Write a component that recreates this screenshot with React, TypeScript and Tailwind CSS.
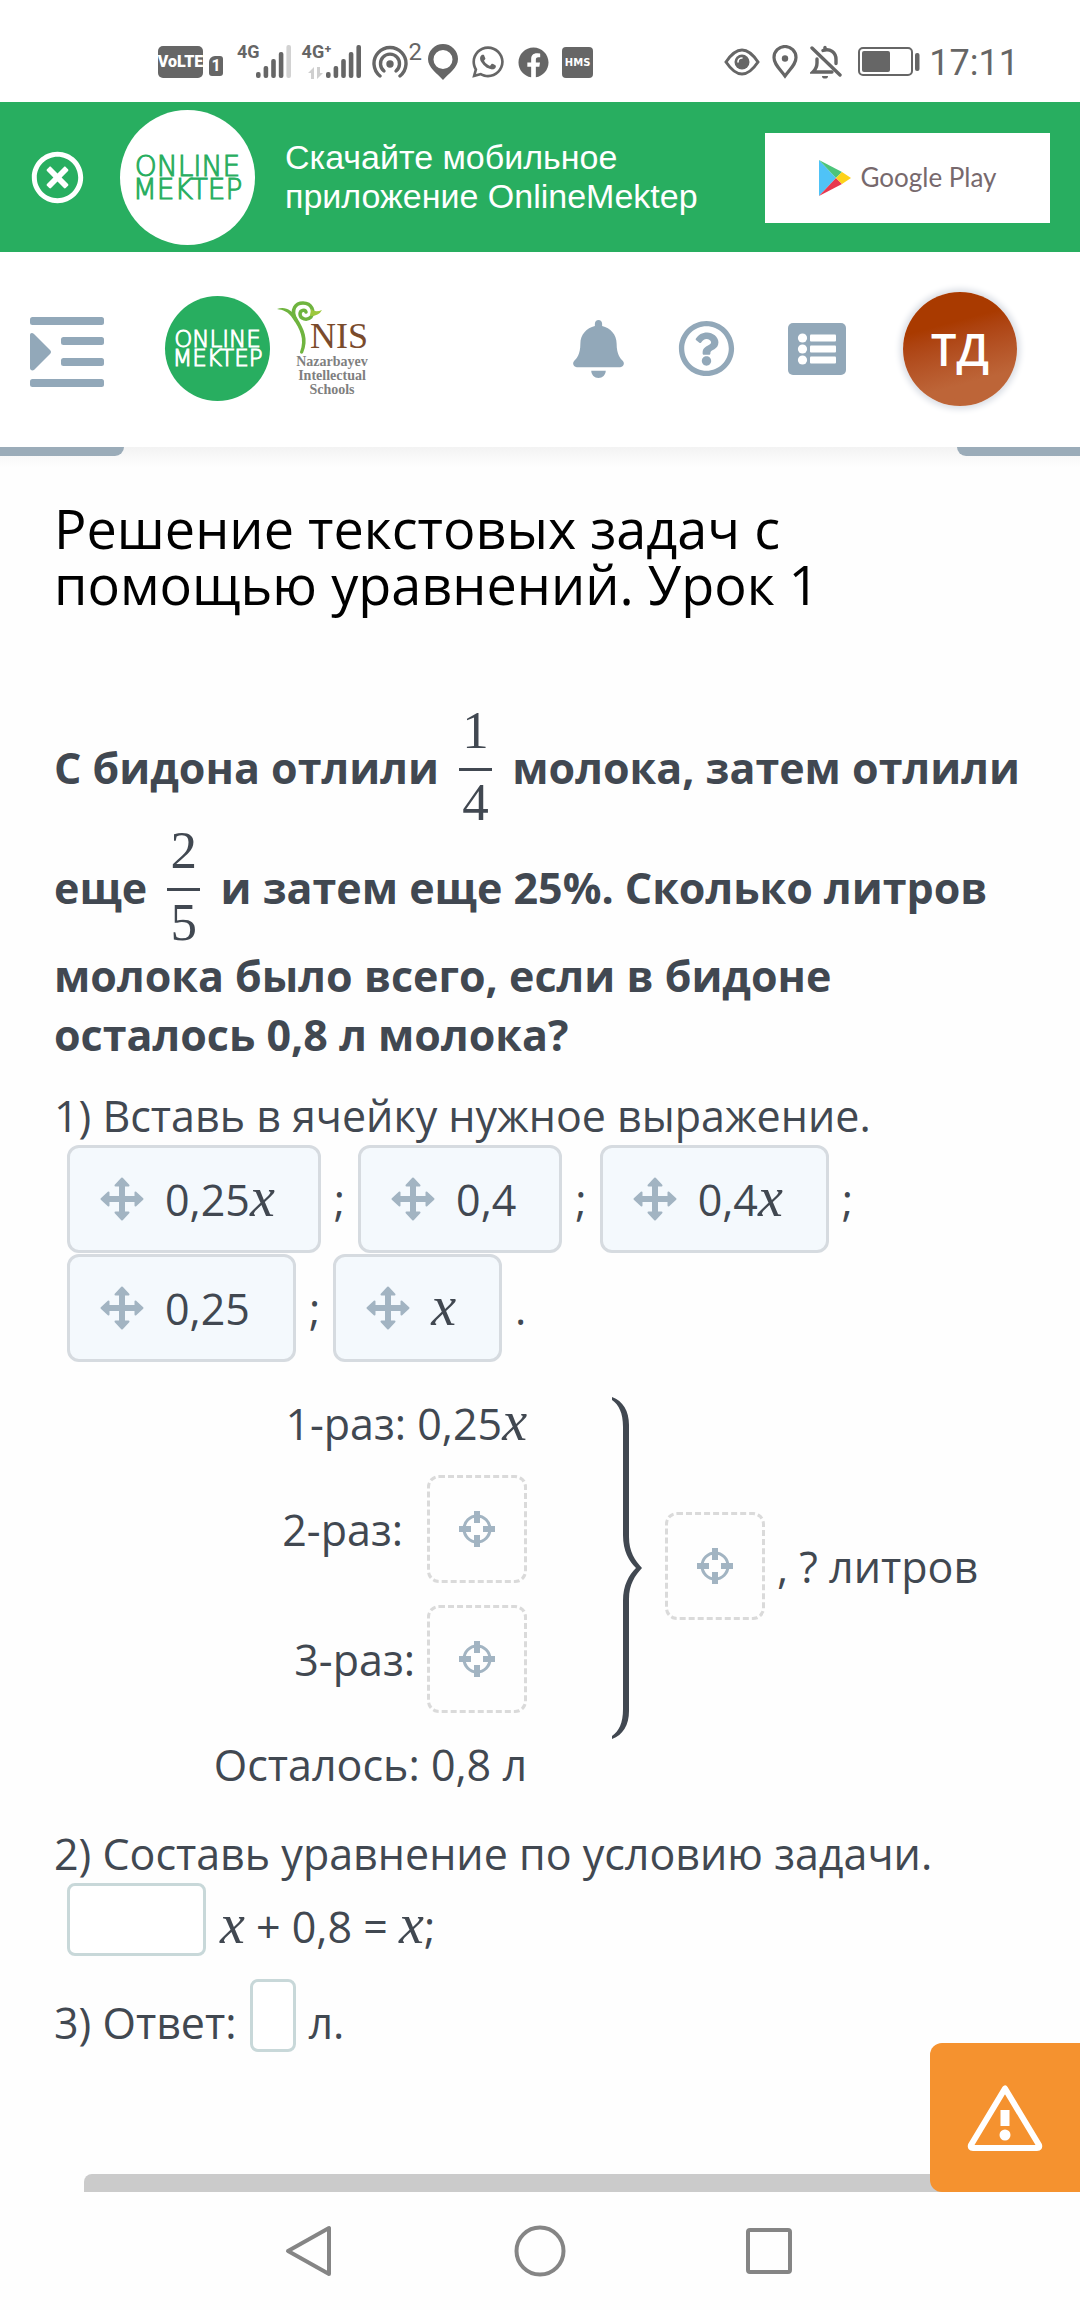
import type { ReactNode } from "react";
import { FaBell, FaFacebook, FaRegQuestionCircle, FaRegTimesCircle, FaWhatsapp } from "react-icons/fa";

function SignalBars({ weak = false }: { weak?: boolean }) {
  const heights = [6, 12, 19, 26, 33];
  return (
    <svg viewBox="0 0 36 34" className="h-[34px] w-9" fill="#666">
      {heights.map((h, i) => (
        <rect key={h} x={i * 7.6} y={34 - h} width="4.6" height={h} rx="2" fill={weak && i === 4 ? "#d2d2d2" : "#666"} />
      ))}
    </svg>
  );
}

function StatusBar() {
  return (
    <div className="flex h-[102px] items-start justify-between bg-white pt-[44px] pr-[61px] pl-[158px] font-['Roboto',sans-serif] text-[#666]">
      <div className="flex items-start">
        <span className="mt-[2px] flex h-8 w-[45px] items-center justify-center rounded-[5px] bg-[#666] text-[16px] font-black text-white">
          VoLTE
        </span>
        <span className="mt-3 ml-[6px] flex h-5 w-[14px] items-center justify-center rounded-[3px] rounded-tl-md bg-[#666] text-[16px] font-bold text-white">
          1
        </span>
        <span className="ml-[14px] text-[18px] leading-4 font-bold">4G</span>
        <span className="-ml-1">
          <SignalBars weak />
        </span>
        <span className="relative ml-[10px] w-6 text-[18px] leading-4 font-bold whitespace-nowrap">
          4G⁺
          <svg viewBox="0 0 16 12" className="absolute top-[23px] left-[6px] h-3 w-4" fill="#cfcfcf">
            <path d="M6 0v12H3V6H0zM9 0v12l6-6h-3V0z" />
          </svg>
        </span>
        <SignalBars />
        <svg viewBox="0 0 36 34" className="mt-px ml-[10px] h-[34px] w-9" fill="none" stroke="#666" strokeWidth="3.4" strokeLinecap="round">
          <path d="M8 31a16 16 0 1 1 20 0" />
          <path d="M12 26a9.500 9.500 0 1 1 12 0" />
          <circle cx="18" cy="19" r="2" fill="#666" />
        </svg>
        <span className="ml-px text-[24px] leading-4">2</span>
        <svg viewBox="0 0 30 36" className="ml-[6px] h-9 w-[30px]" fill="#666" fillRule="evenodd">
          <path d="M15 0a15 15 0 0 1 15 15c0 9-9 14-15 21C9 29 0 24 0 15A15 15 0 0 1 15 0zm0 6a9.500 9.500 0 1 0 0 19 9.500 9.500 0 0 0 0-19z" />
        </svg>
        <FaWhatsapp className="ml-3 h-9 w-9" />
        <FaFacebook className="mt-[3px] ml-3 h-[31px] w-[31px]" />
        <span className="mt-[3px] ml-[13px] flex h-[31px] w-[31px] items-center justify-center rounded bg-[#666] font-['DejaVu_Sans',sans-serif] text-[10px] font-bold text-white">
          HMS
        </span>
      </div>
      <div className="flex items-start">
        <svg viewBox="0 0 36 28" className="mt-1 h-7 w-9" fill="none" stroke="#666" strokeWidth="3">
          <path d="M2 14C8 5 13 2 18 2s10 3 16 12c-6 9-11 12-16 12S8 23 2 14z" />
          <circle cx="18" cy="14" r="7.500" fill="#666" stroke="none" />
          <path d="M14 14a4 4 0 0 1 4-4" stroke="#fff" strokeWidth="1.600" strokeLinecap="round" />
        </svg>
        <svg viewBox="0 0 26 34" className="mt-px ml-3 h-[34px] w-[26px]" fill="none" stroke="#666" strokeWidth="3.200">
          <path d="M13 31C7 23 2 19 2 12.500a11 11 0 0 1 22 0C24 19 19 23 13 31z" />
          <circle cx="13" cy="13.500" r="3.200" fill="#666" stroke="none" />
        </svg>
        <svg viewBox="0 0 32 34" className="mt-px ml-3 h-[34px] w-8" fill="none" stroke="#666" strokeWidth="3.400" strokeLinecap="round">
          <path d="M2 3l28 27" />
          <path d="M22 27H3c3-3 4-5 4-9v-4M13 5.500c7-2.500 13 2 13 9v4" />
          <path d="M15 3.500V2.500" />
          <path d="M12 31h6a3 2.600 0 0 1-6 0z" fill="#666" stroke="none" />
        </svg>
        <svg viewBox="0 0 62 30" className="mt-[3px] ml-4 h-[30px] w-[62px]" fill="#666">
          <rect x="1" y="1" width="53" height="27" rx="4" fill="none" stroke="#666" strokeWidth="2" />
          <rect x="4" y="4" width="28" height="21" rx="2" />
          <rect x="57" y="6" width="4.500" height="18" rx="2" />
        </svg>
        <time className="ml-[9px] text-[36px] leading-[38px]">17:11</time>
      </div>
    </div>
  );
}

function Wordmark({ className }: { className: string }) {
  return (
    <span className={`flex shrink-0 flex-col items-center justify-center rounded-full font-['DejaVu_Sans_Light','DejaVu_Sans',sans-serif] font-extralight [-webkit-text-stroke:1px_currentColor] ${className}`}>
      <span>ONLINE</span>
      <span>MEKTEP</span>
    </span>
  );
}

function AppBanner() {
  return (
    <section className="flex items-center bg-[#28ae60] pt-2 pr-[30px] pb-[7px] pl-[31px]">
      <button type="button" aria-label="Закрыть" className="text-white">
        <FaRegTimesCircle className="h-[53px] w-[53px]" />
      </button>
      <Wordmark className="ml-9 h-[135px] w-[135px] bg-white text-[28px] leading-[23px] text-[#28ae60]" />
      <p className="ml-[30px] max-w-[430px] pb-[2px] font-['Liberation_Sans',sans-serif] text-[34px] leading-[39px] text-white">
        Скачайте мобильное приложение OnlineMektep
      </p>
      <a href="#play" className="ml-auto flex h-[90px] w-[285px] items-center justify-center gap-[10px] bg-white">
        <svg viewBox="0 0 32 36" className="h-9 w-8">
          <path d="M0 0v36l17-18z" fill="#4fc3f7" />
          <path d="M0 0l17 18 6-6z" fill="#4cc47a" />
          <path d="M0 36l17-18 6 6z" fill="#e8384f" />
          <path d="M17 18l6-6 9 6-9 6z" fill="#fdd21a" />
        </svg>
        <span className="font-['Lato',sans-serif] text-[26px] text-[#77696d]">Google Play</span>
      </a>
    </section>
  );
}

function SiteHeader() {
  return (
    <header className="relative z-10 flex h-[195px] items-center bg-white pr-[63px] pb-[2px] pl-[30px] text-[#92a8b9]">
      <button type="button" aria-label="Меню">
        <svg viewBox="0 0 74 70" className="mt-[6px] h-[70px] w-[74px]" fill="currentColor">
          <rect width="74" height="8" rx="2.500" />
          <rect x="31" y="20" width="43" height="8" rx="2.500" />
          <rect x="31" y="41" width="43" height="8" rx="2.500" />
          <rect y="62" width="74" height="8" rx="2.500" />
          <path d="M0 18c0-2 2-3 4-1l16 16q2 2 0 4L4 53c-2 1-4 0-4-2z" />
        </svg>
      </button>
      <Wordmark className="ml-[61px] h-[105px] w-[105px] bg-[#28ae60] text-[23px] leading-[19px] text-white" />
      <div className="ml-[7px] flex w-24 flex-col font-['Liberation_Serif',serif]">
        <div className="flex h-[54px] items-end">
          <svg viewBox="0 0 46 54" className="h-[54px] w-[46px] shrink-0">
            <path d="M0 8C8 5 15 9 20 17c7 11 12 21 6 35-1 1-3 1-3-1C28 38 23 28 16 18 11 10 6 9 0 8z" fill="#6fb43f" />
            <path d="M19 19C13 8 19 2 26 2c9 0 12 9 8 14-4 4-11 2-11-3 0-4 5-5 6-2" fill="none" stroke="#6fb43f" strokeWidth="3.500" strokeLinecap="round" />
            <path d="M34 8q4 4 11 1-3 6-12 6z" fill="#9dc83c" />
          </svg>
          <span className="-ml-[13px] text-[36px] leading-[37px] text-[#7a4b2c]">NIS</span>
        </div>
        <p className="ml-[18px] w-[74px] text-center text-[14px] leading-[14px] font-bold text-[#7f7f7f]">
          Nazarbayev Intellectual Schools
        </p>
      </div>
      <div className="ml-auto flex items-center">
        <button type="button" aria-label="Уведомления">
          <FaBell className="h-[58px] w-[51px]" />
        </button>
        <button type="button" aria-label="Помощь" className="ml-[54px]">
          <FaRegQuestionCircle className="h-[57px] w-[57px]" />
        </button>
        <button type="button" aria-label="Список" className="ml-[53px]">
          <svg viewBox="0 0 58 52" className="h-[52px] w-[58px]" fill="#fff">
            <rect width="58" height="52" rx="5" fill="#92a8b9" />
            {[15, 26, 37].map((y) => (
              <g key={y}>
                <circle cx="14.500" cy={y} r="4.600" />
                <rect x="22" y={y - 3.5} width="26" height="7" rx="1" />
              </g>
            ))}
          </svg>
        </button>
        <button
          type="button"
          aria-label="Профиль"
          className="ml-[57px] h-[114px] w-[114px] rounded-full bg-linear-165 from-[#a93a00] from-30% to-[#bd6538] to-75% font-['Open_Sans',sans-serif] text-[45px] font-semibold text-white shadow-[0_0_6px_3px_#d9dde4]"
        >
          ТД
        </button>
      </div>
    </header>
  );
}

function Fraction({ top, bottom }: { top: string; bottom: string }) {
  return (
    <span className="mx-[9px] inline-flex w-[33px] flex-col items-center align-[36px] font-['Liberation_Serif',serif] text-[53px] leading-[48px] font-normal">
      <span>{top}</span>
      <span className="mt-[14px] mb-[7px] h-[3px] w-full bg-[#414851]" />
      <span>{bottom}</span>
    </span>
  );
}

function X() {
  return <i className="font-['Liberation_Serif',serif] text-[56px] leading-none">x</i>;
}

function MoveIcon() {
  return (
    <svg viewBox="0 0 44 44" className="h-11 w-11" fill="#a2b4c2" stroke="#a2b4c2" strokeLinejoin="round" strokeWidth="2">
      <path d="M22 5v34M5 22h34" strokeWidth="6" />
      <path d="M22 1.500l6.500 7h-13zM22 42.500l6.500-7h-13zM1.500 22l7-6.500v13zM42.500 22l-7-6.500v13z" />
    </svg>
  );
}

function Chip({ children }: { children: ReactNode }) {
  return (
    <button type="button" className="flex h-[108px] items-center rounded-xl border-[3px] border-[#d6dbe0] bg-[#f4f9fd] pr-[43px] pl-[30px]">
      <MoveIcon />
      <span className="ml-[21px] leading-[59px]">{children}</span>
    </button>
  );
}

function DropCell({ label }: { label: string }) {
  return (
    <button type="button" aria-label={label} className="flex h-[108px] w-[100px] shrink-0 items-center justify-center rounded-xl border-[3px] border-dashed border-[#dadada]">
      <svg viewBox="0 0 38 38" className="h-[38px] w-[38px]" fill="none" stroke="#a2b4c2">
        <circle cx="19" cy="19" r="13" strokeWidth="3" />
        <path d="M19 1v12M19 25v12M1 19h12M25 19h12" strokeWidth="6" />
      </svg>
    </button>
  );
}

function Lesson() {
  return (
    <main className="relative flex flex-1 flex-col bg-[#fefefe] bg-linear-to-b from-[#f3f3f3] to-[#fefefe] to-[20px]">
      <div className="flex justify-between">
        <span className="h-[9px] w-[124px] rounded-br-[14px] bg-[#9bacb9]" />
        <span className="h-[9px] w-[123px] rounded-bl-[14px] bg-[#9bacb9]" />
      </div>
      <div className="px-[54px] pt-11 font-['Open_Sans',sans-serif] text-[43px] leading-[59px] text-[#414851]">
        <h1 className="text-[54px] leading-[56px] text-black">Решение текстовых задач с помощью уравнений. Урок 1</h1>
        <p className="mt-[94px] font-bold">
          С бидона отлили <Fraction top="1" bottom="4" /> молока, затем отлили еще <Fraction top="2" bottom="5" /> и затем еще 25%.
          Сколько литров молока было всего, если в бидоне осталось 0,8 л молока?
        </p>
        <p className="mt-[22px]">1) Вставь в ячейку нужное выражение.</p>
        <div className="flex flex-col gap-px pl-[13px]">
          <div className="flex items-center gap-[13px]">
            <Chip>0,25<X /></Chip>
            <span>;</span>
            <Chip>0,4</Chip>
            <span>;</span>
            <Chip>0,4<X /></Chip>
            <span>;</span>
          </div>
          <div className="flex items-center gap-[13px]">
            <Chip>0,25</Chip>
            <span>;</span>
            <Chip><X /></Chip>
            <span>.</span>
          </div>
        </div>

        <div className="mt-[31px] flex">
          <div className="flex w-[473px] flex-col items-end gap-[22px]">
            <p>1-раз: 0,25<X /></p>
            <div className="flex items-center gap-6">
              <span>2-раз:</span>
              <DropCell label="2-раз" />
            </div>
            <div className="flex items-center gap-3">
              <span>3-раз:</span>
              <DropCell label="3-раз" />
            </div>
            <p>Осталось: 0,8 л</p>
          </div>
          <div className="mt-1 ml-[84px] flex items-center self-start">
            <svg viewBox="0 0 32 342" className="h-[342px] w-8" fill="#414851">
              <path d="M1 0C12 4 18 14 18 28V140C18 155 24 163 31 171C24 179 18 187 18 202V314C18 328 12 338 1 342V339C8 334 12 326 12 312V204C12 188 18 178 25 171C18 164 12 154 12 138V30C12 16 8 8 1 3Z" />
            </svg>
            <span className="ml-[22px] flex items-center gap-3 pb-1">
              <DropCell label="Всего" />
              <span>, ? литров</span>
            </span>
          </div>
        </div>

        <p className="mt-[30px]">2) Составь уравнение по условию задачи.</p>
        <div className="flex items-end gap-[14px] pl-[13px]">
          <input aria-label="Коэффициент" className="h-[73px] w-[139px] rounded-lg border-[3px] border-[#c8d8d9] bg-white px-3" />
          <span><X /> + 0,8 = <X />;</span>
        </div>
        <div className="mt-[23px] flex items-end gap-[13px]">
          <label htmlFor="answer">3) Ответ:</label>
          <input id="answer" className="h-[73px] w-[46px] rounded-lg border-[3px] border-[#c8d8d9] bg-white px-1" />
          <span>л.</span>
        </div>
      </div>
      <div className="mt-auto ml-[84px] h-[18px] rounded-tl-lg bg-[#cbcbcb]" />
      <button type="button" aria-label="Сообщить об ошибке" className="absolute right-0 bottom-0 flex h-[149px] w-[150px] items-center justify-center rounded-l-xl bg-[#f5922f]">
        <svg viewBox="0 0 76 68" className="h-[68px] w-[76px]" fill="none" stroke="#fff" strokeWidth="6" strokeLinejoin="round">
          <path d="M38 4.500L4 61q-1 3 2 3h64q3 0 2-3z" />
          <path d="M38 26v16" strokeWidth="9" />
          <circle cx="38" cy="51" r="5.500" fill="#fff" stroke="none" />
        </svg>
      </button>
    </main>
  );
}

function SystemNav() {
  return (
    <nav className="flex h-[118px] items-center justify-center gap-[178px] bg-[#fefefe]">
      <button type="button" aria-label="Назад">
        <svg viewBox="0 0 52 52" className="h-[52px] w-[52px]" fill="none" stroke="#858585" strokeWidth="4" strokeLinejoin="round">
          <path d="M45 3v46L4 26z" />
        </svg>
      </button>
      <button type="button" aria-label="Домой">
        <svg viewBox="0 0 52 52" className="h-[52px] w-[52px]" fill="none" stroke="#858585" strokeWidth="4">
          <circle cx="26" cy="26" r="23.500" />
        </svg>
      </button>
      <button type="button" aria-label="Недавние">
        <svg viewBox="0 0 52 52" className="h-[52px] w-[52px]" fill="none" stroke="#858585" strokeWidth="4">
          <rect x="4" y="5" width="42" height="42" rx="2" />
        </svg>
      </button>
    </nav>
  );
}

export default function App() {
  return (
    <div className="flex min-h-screen flex-col bg-white">
      <StatusBar />
      <AppBanner />
      <SiteHeader />
      <Lesson />
      <SystemNav />
    </div>
  );
}
